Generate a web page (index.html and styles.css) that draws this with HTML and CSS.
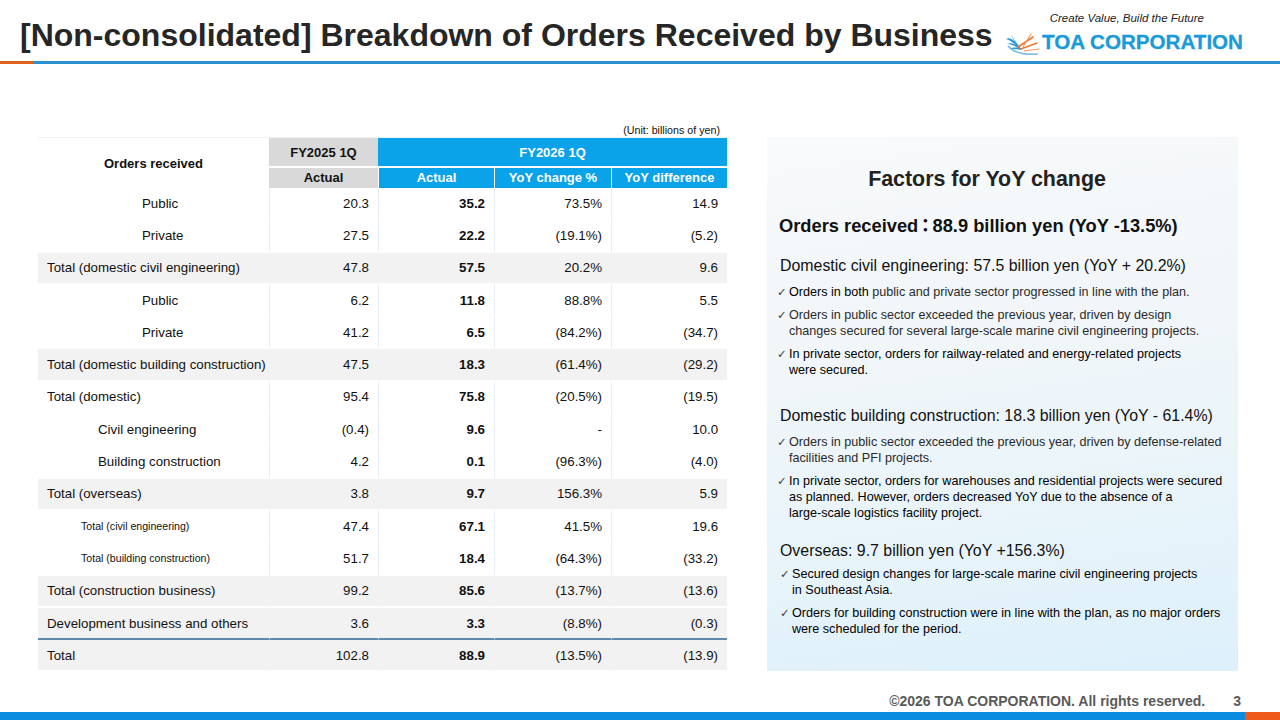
FILE: index.html
```html
<!DOCTYPE html>
<html lang="en">
<head>
<meta charset="utf-8">
<title>Breakdown of Orders Received by Business</title>
<link rel="stylesheet" href="styles.css">
</head>
<body>
<div class="slide">
  <header class="top">
    <h1 class="title">[Non-consolidated] Breakdown of Orders Received by Business</h1>
    <div class="brand">
      <div class="tagline">Create Value, Build the Future</div>
      <div class="brand-row">
        <svg class="bird" width="36" height="24" viewBox="0 0 36 24" aria-hidden="true">
          <path d="M1 7 C5 8 8 11 11 13 C8 11 4 11 2 12 C6 12 10 14 13 16 C10 15 6 16 4 17 C9 17 13 17 17 18 C14 14 10 9 6 3 C8 7 9 9 10 10 C7 7 4 5 1 7 Z" fill="#2a9ad6"/>
          <path d="M3 14 C9 21 20 23 33 22" fill="none" stroke="#7bbbe0" stroke-width="1.6"/>
          <path d="M13 15 L28 5" stroke="#ef7a34" stroke-width="1.8" stroke-linecap="round"/>
          <path d="M16 17 L32 11" stroke="#ef7a34" stroke-width="1.6" stroke-linecap="round"/>
          <path d="M18 15 L26 2" stroke="#f29a5c" stroke-width="1.2" stroke-linecap="round"/>
          <path d="M19 19 L34 17" stroke="#f29a5c" stroke-width="1.2" stroke-linecap="round"/>
        </svg>
        <span class="brand-name">TOA CORPORATION</span>
      </div>
    </div>
  </header>
  <div class="rule"><span class="rule-accent"></span><span class="rule-main"></span></div>

  <main class="content">
    <section class="left">
      <div class="unit">(Unit: billions of yen)</div>
      <table class="orders">
        <colgroup>
          <col class="c-label"><col class="c-prev"><col class="c-act"><col class="c-pct"><col class="c-diff">
        </colgroup>
        <thead>
          <tr class="hr1">
            <th rowspan="2" class="h-label">Orders received</th>
            <th class="h-prev">FY2025 1Q</th>
            <th colspan="3" class="h-cur">FY2026 1Q</th>
          </tr>
          <tr class="hr2">
            <th class="h-prev">Actual</th>
            <th class="h-cur">Actual</th>
            <th class="h-cur">YoY change %</th>
            <th class="h-cur">YoY difference</th>
          </tr>
        </thead>
        <tbody>
          <tr class="plain"><td class="lbl ind2">Public</td><td>20.3</td><td class="b">35.2</td><td>73.5%</td><td>14.9</td></tr>
          <tr class="plain"><td class="lbl ind2">Private</td><td>27.5</td><td class="b">22.2</td><td>(19.1%)</td><td>(5.2)</td></tr>
          <tr class="shade"><td class="lbl">Total (domestic civil engineering)</td><td>47.8</td><td class="b">57.5</td><td>20.2%</td><td>9.6</td></tr>
          <tr class="plain"><td class="lbl ind2">Public</td><td>6.2</td><td class="b">11.8</td><td>88.8%</td><td>5.5</td></tr>
          <tr class="plain"><td class="lbl ind2">Private</td><td>41.2</td><td class="b">6.5</td><td>(84.2%)</td><td>(34.7)</td></tr>
          <tr class="shade"><td class="lbl">Total (domestic building construction)</td><td>47.5</td><td class="b">18.3</td><td>(61.4%)</td><td>(29.2)</td></tr>
          <tr class="plain"><td class="lbl">Total (domestic)</td><td>95.4</td><td class="b">75.8</td><td>(20.5%)</td><td>(19.5)</td></tr>
          <tr class="plain"><td class="lbl ind1">Civil engineering</td><td>(0.4)</td><td class="b">9.6</td><td>-</td><td>10.0</td></tr>
          <tr class="plain"><td class="lbl ind1">Building construction</td><td>4.2</td><td class="b">0.1</td><td>(96.3%)</td><td>(4.0)</td></tr>
          <tr class="shade"><td class="lbl">Total (overseas)</td><td>3.8</td><td class="b">9.7</td><td>156.3%</td><td>5.9</td></tr>
          <tr class="plain"><td class="lbl small">Total (civil engineering)</td><td>47.4</td><td class="b">67.1</td><td>41.5%</td><td>19.6</td></tr>
          <tr class="plain"><td class="lbl small">Total (building construction)</td><td>51.7</td><td class="b">18.4</td><td>(64.3%)</td><td>(33.2)</td></tr>
          <tr class="shade"><td class="lbl">Total (construction business)</td><td>99.2</td><td class="b">85.6</td><td>(13.7%)</td><td>(13.6)</td></tr>
          <tr class="shade pre-total"><td class="lbl">Development business and others</td><td>3.6</td><td class="b">3.3</td><td>(8.8%)</td><td>(0.3)</td></tr>
          <tr class="shade"><td class="lbl">Total</td><td>102.8</td><td class="b">88.9</td><td>(13.5%)</td><td>(13.9)</td></tr>
        </tbody>
      </table>
    </section>

    <aside class="factors">
      <h2 class="f-title">Factors for YoY change</h2>
      <p class="f-head">Orders received<span class="fw-colon">：</span>88.9 billion yen (YoY -13.5%)</p>

      <h3 class="f-sec">Domestic civil engineering: 57.5 billion yen (YoY + 20.2%)</h3>
      <ul class="checks">
        <li><span class="ck">✓</span><span><span class="dark">Orders in both</span> public and private sector progressed in line with the plan.</span></li>
        <li><span class="ck">✓</span><span>Orders in public sector exceeded the previous year, driven by design<br>changes secured for several large-scale marine civil engineering projects.</span></li>
        <li class="dark"><span class="ck">✓</span><span>In private sector, orders for railway-related and energy-related projects<br>were secured.</span></li>
      </ul>

      <h3 class="f-sec sec2">Domestic building construction: 18.3 billion yen (YoY - 61.4%)</h3>
      <ul class="checks">
        <li><span class="ck">✓</span><span>Orders in public sector exceeded the previous year, driven by defense-related<br>facilities and PFI projects.</span></li>
        <li class="dark"><span class="ck">✓</span><span>In private sector, orders for warehouses and residential projects were secured<br>as planned. However, orders decreased YoY due to the absence of a<br>large-scale logistics facility project.</span></li>
      </ul>

      <h3 class="f-sec sec3">Overseas: 9.7 billion yen (YoY +156.3%)</h3>
      <ul class="checks shifted">
        <li class="dark"><span class="ck">✓</span><span>Secured design changes for large-scale marine civil engineering projects<br>in Southeast Asia.</span></li>
        <li class="dark"><span class="ck">✓</span><span>Orders for building construction were in line with the plan, as no major orders<br>were scheduled for the period.</span></li>
      </ul>
    </aside>
  </main>

  <footer class="foot">
    <span class="copy">©2026 TOA CORPORATION. All rights reserved.</span>
    <span class="page">3</span>
  </footer>
  <div class="bottom-bar"><span class="bb-main"></span><span class="bb-accent"></span></div>
</div>
</body>
</html>
```

FILE: styles.css
```css
* { box-sizing: border-box; }

html, body {
  margin: 0;
  padding: 0;
  background: #ffffff;
}

body {
  font-family: "Liberation Sans", Arial, "Noto Sans CJK JP", sans-serif;
  color: #111;
}

.slide {
  width: 1280px;
  height: 720px;
  display: flex;
  flex-direction: column;
  overflow: hidden;
}

/* ---------- header ---------- */
.top {
  height: 61px;
  display: flex;
  align-items: flex-start;
}

.title {
  margin: 0;
  padding: 17px 0 0 20px;
  font-size: 32px;
  line-height: 36px;
  font-weight: 700;
  color: #262626;
  white-space: nowrap;
}

.brand {
  margin-left: auto;
  padding: 11px 37px 0 0;
  display: flex;
  flex-direction: column;
  align-items: flex-end;
}

.tagline {
  font-size: 11.5px;
  line-height: 15px;
  font-style: italic;
  color: #222;
  padding-right: 39px;
}

.brand-row {
  display: flex;
  align-items: center;
  margin-top: 2px;
  gap: 1px;
}

.bird { display: block; margin-top: 4px; }

.brand-name {
  font-size: 20.6px;
  line-height: 22px;
  font-weight: 700;
  color: #1a9ad8;
  -webkit-text-stroke: 0.3px #1a9ad8;
}

.rule {
  display: flex;
  height: 3px;
}
.rule-accent { width: 33px; background: #e0621f; }
.rule-main { flex: 1; background: #2b90d0; }

/* ---------- content ---------- */
.content {
  flex: 1;
  display: flex;
  align-items: flex-start;
}

.left {
  margin-left: 38px;
  padding-top: 60px;
  width: 689px;
}

.unit {
  font-size: 10.7px;
  line-height: 13px;
  text-align: right;
  padding-right: 7px;
  color: #111;
}

.orders {
  width: 689px;
  table-layout: fixed;
  border-collapse: separate;
  border-spacing: 0;
  font-size: 13.3px;
  border-top: 1px solid #eef2f6;
}

.c-label { width: 231px; }
.c-prev { width: 109px; }
.c-act { width: 116px; }
.c-pct { width: 117px; }
.c-diff { width: 116px; }

.orders th {
  font-weight: 700;
  padding: 0;
  font-size: 13px;
}

.hr1 th { height: 30px; border-bottom: 2px solid #fff; }
.hr2 th { height: 20px; line-height: 20px; }

.h-label {
  background: #fff;
  color: #111;
  border-bottom: 0 !important;
}
.h-prev { background: #d9d9d9; color: #111; }
.h-cur { background: #0aa2e8; color: #fff; }
.hr2 .h-cur + .h-cur { border-left: 1px solid #fff; }
.hr2 .h-prev + .h-cur { border-left: 1px solid #fff; }

.orders td {
  height: 32.3px;
  padding: 0 9px 0 0;
  text-align: right;
  border-bottom: 2px solid #fff;
  white-space: nowrap;
}

.orders td + td { border-left: 1px solid #e7edf4; }

.orders td.lbl { text-align: left; padding-left: 9px; }
.orders td.ind1 { padding-left: 60px; }
.orders td.ind2 { padding-left: 104px; }
.orders td.small { padding-left: 43px; font-size: 10.6px; }
.orders td.b { font-weight: 700; }

.shade td { background: #f2f2f2; }
.shade td + td { border-left-color: #f2f2f2; }
.pre-total td { border-bottom: 2px solid #5f88ad; }

/* ---------- factors panel ---------- */
.factors {
  margin-left: 40px;
  margin-top: 73px;
  width: 471px;
  height: 534px;
  padding: 0 0 0 12px;
  background: linear-gradient(172deg, #f8fafb 0%, #f2f6f9 35%, #e8f4fa 70%, #ddf0fb 100%);
  color: #1a1a1a;
}

.f-title {
  margin: 30px 0 0 0;
  padding-right: 43px;
  text-align: center;
  font-size: 21.4px;
  line-height: 24px;
  font-weight: 700;
  color: #222;
}

.f-head {
  margin: 24px 0 0 0;
  font-size: 18.3px;
  line-height: 22px;
  font-weight: 700;
  color: #111;
}

.fw-colon {
  margin-left: -2px;
  margin-right: -2px;
}

.f-sec {
  margin: 19px 0 0 1px;
  font-size: 15.9px;
  line-height: 20px;
  font-weight: 400;
  color: #111;
  white-space: nowrap;
}
.f-sec.sec2 { margin-top: 28px; }
.f-sec.sec3 { margin-top: 20px; }

.checks {
  list-style: none;
  margin: 0;
  padding: 0;
}

.checks li {
  display: flex;
  font-size: 12.6px;
  line-height: 16px;
  color: #2a2a2a;
  margin-top: 7px;
  white-space: nowrap;
}
.checks li:first-child { margin-top: 8px; }
.checks.shifted li:first-child { margin-top: 5px; }
.checks.shifted { padding-left: 3px; }

.checks li.dark, .checks .dark { color: #000; }

.ck {
  flex: none;
  width: 12px;
  margin-left: -2px;
  font-family: "DejaVu Sans", sans-serif;
  font-size: 11.5px;
  color: #444;
}

/* ---------- footer ---------- */
.foot {
  height: 23px;
  display: flex;
  align-items: center;
  justify-content: flex-end;
  padding-right: 39px;
  font-weight: 700;
  color: #5a5a5a;
  font-size: 14px;
}

.copy { margin-right: 28px; }
.page { font-size: 14px; }

.bottom-bar {
  display: flex;
  height: 8px;
}
.bb-main { flex: 1; background: #0a8de0; }
.bb-accent { width: 35px; background: #ef5a1a; }
```
